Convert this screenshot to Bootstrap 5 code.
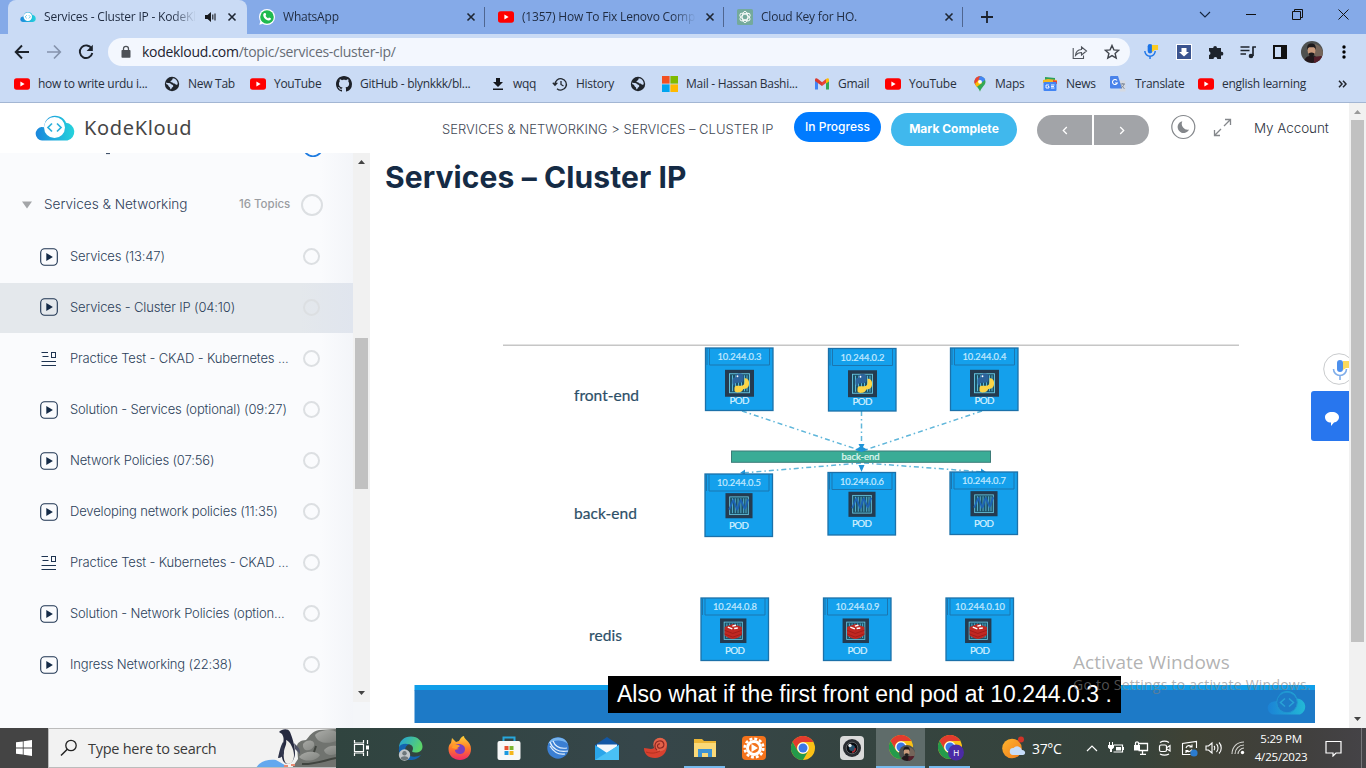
<!DOCTYPE html>
<html lang="en">
<head>
<meta charset="utf-8">
<meta name="viewport" content="width=device-width, initial-scale=1">
<title>Services - Cluster IP - KodeKloud</title>
<link href="https://cdn.jsdelivr.net/npm/bootstrap@5.3.0/dist/css/bootstrap.min.css" rel="stylesheet">
<style>
html,body{height:100%;overflow:hidden}
body{font-family:"Inter",sans-serif;background:#fff;color:#172b4d;width:1366px;height:768px}
svg{display:block;flex:none}
.seg{font-family:"Open Sans","Noto Sans",sans-serif}
/* browser chrome */
.tabstrip{height:34px;background:#85aae8;padding-left:8px;font-size:12px;letter-spacing:-.2px;color:#1f2b40}
.tabx{width:239px;height:34px;padding-left:12px;position:relative}
.tabx.act{background:#cadbf5;border-radius:8px 8px 0 0}
.tabx .ttl{width:174px;margin-left:8px;white-space:nowrap;overflow:hidden;line-height:34px;-webkit-mask-image:linear-gradient(90deg,#000 150px,transparent 174px)}
.tabx.act .ttl{width:152px;-webkit-mask-image:linear-gradient(90deg,#000 128px,transparent 152px)}
.tabx.line::after{content:"";width:1px;height:20px;background:#4f6690;position:absolute;right:1px;top:7px}
.tabx .cls{position:absolute;left:219px;top:12px}
.winb{width:46px;height:29px}
.toolbar{height:35px;background:#cadbf5;padding-left:6px}
.tb{width:32px;height:32px}
.omni{width:1022px;height:28px;border-radius:14px;background:#f3f7fe;margin-left:6px;margin-right:6px;padding:0 2px 0 12px;font-size:14px;letter-spacing:-.29px}
.omni .host{color:#1c2330}.omni .path{color:#676d76}
.marks{height:33px;background:#cadbf5;display:grid;grid-template-columns:151px 85px 86px 155px 61px 78px 32px 152px 71px 88px 69px 68px 88px 140px 20px;padding:0 0 3px 14px;font-size:12px;color:#28303d;letter-spacing:-.28px}
.marks>div{display:flex;align-items:center;gap:8px;white-space:nowrap}
.edge{height:1px;background:#a3b6d3}
/* site header */
.site{height:50px;background:#fff;width:1349px}
.brandtxt{font-family:"Noto Sans",sans-serif;font-size:20px;color:#464646;line-height:50px;letter-spacing:.65px}
.crumb{font-size:13px;font-weight:300;color:#3f4855;letter-spacing:.03px;padding-top:3px}
.pill-p{width:87px;height:30px;border-radius:15px;background:#007bff;color:#fff;font-size:12px;font-weight:500;line-height:30px;text-align:center;margin-bottom:2px}
.pill-m{width:126px;height:33px;border-radius:17px;background:#40b8ed;color:#fff;font-size:12px;font-weight:700;line-height:32px;text-align:center;margin-top:2px}
.nv{width:55px;height:30px;background:#a2a4a8}
.acct{font-size:13.5px;color:#2d333e;letter-spacing:-.08px;font-weight:300}
/* sidebar */
.side{width:353px;height:575px;background:linear-gradient(90deg,#fafbfd 320px,#f3f5f9 353px);overflow:hidden}
.side .peek{height:26px}
.sec{height:51px;font-size:13.600px;color:#2f4059;font-weight:300;margin-bottom:2px;letter-spacing:-.02px}
.tpc{height:51px;padding-left:40px;padding-bottom:2px;font-size:13px;font-weight:300;color:#2c3f5a;letter-spacing:-.15px}
.tpc.on{background:linear-gradient(90deg,#e4e8ec 300px,#e0e5ee 353px);height:50px;margin-bottom:1px}
.tpc .lbl{width:233px;margin-left:12px;padding-top:1px;white-space:nowrap}
.ring{width:17px;height:17px;border:2px solid #dcdfe2;border-radius:50%}
.ring.big{width:22px;height:22px}
.cntt{font-size:11.500px;color:#9a9da2;font-weight:500}
.sb{width:17px;background:#f1f1f1}
.sb .thumb{width:13px;background:#c1c1c1;margin:0 auto}
h1.ttlx{font-size:30px;font-weight:700;letter-spacing:.1px;color:#152b45;height:50px;line-height:49px;margin:0;padding-left:15px}
.over{position:absolute}
.capt{left:608px;top:676px;width:513px;height:37px;background:#000;color:#fff;font-family:"Liberation Sans",Arial,sans-serif;font-size:23px;line-height:36px;padding-left:9px;white-space:nowrap}
.aw{left:1073px;top:648px;color:rgba(130,130,130,.62);white-space:nowrap}
.aw .l1{font-size:19px;line-height:28px;letter-spacing:.05px}
.aw .l2{font-size:14px;line-height:18px;letter-spacing:.24px}
.chat{left:1311px;top:391px;width:38px;height:50px;background:#2876ee;border-radius:3px 0 0 3px}
.mic{left:1323px;top:353px;width:26px;height:32px;overflow:hidden}
/* taskbar */
.task{height:40px;background:linear-gradient(90deg,#444 0,#444 48px,#30443f 336px,#36464a 640px,#35443f 900px,#36433c 1130px,#3f4235 1190px,#403f3c 1290px,#454347 1366px);color:#fff}
.srch{width:288px;background:#f2f2f2;border:1px solid #bcbcbc;border-width:1px 0 1px 1px;color:#3a3a3a;font-size:14.500px;position:relative;overflow:hidden;letter-spacing:-.26px}
.ti{width:49px;height:40px;position:relative}
.ti.on{background:#5f6c6a}
.ti.run::after{content:"";position:absolute;bottom:0;left:4px;right:4px;height:2px;background:#76b9ed}
.ti.on::after{left:0;right:0}
.tray{width:24.300px}
.clock{width:66px;font-size:11.500px;line-height:18px;letter-spacing:-.2px;text-align:center}
</style>
</head>
<body>
<svg width="0" height="0" class="over">
<defs>
<linearGradient id="lg" x1="0" x2="1"><stop offset="0" stop-color="#1a86dc"/><stop offset="1" stop-color="#25d3dc"/></linearGradient>
<linearGradient id="pn" x1="0" x2="1"><stop offset="0" stop-color="#2a2f45"/><stop offset="1" stop-color="#55586a"/></linearGradient>
<linearGradient id="ff" x1="0" y1="0" x2="0" y2="1"><stop offset="0" stop-color="#ffd43a"/><stop offset=".5" stop-color="#ff7a2a"/><stop offset="1" stop-color="#f0286a"/></linearGradient>
<linearGradient id="eg" x1="0" x2="1" y1="0" y2=".4"><stop offset="0" stop-color="#1f9fe0"/><stop offset="1" stop-color="#5ad36a"/></linearGradient>
<linearGradient id="sun" x1="0" x2="1" y1="0" y2="1"><stop offset="0" stop-color="#ffb52e"/><stop offset="1" stop-color="#f07b1c"/></linearGradient>
<linearGradient id="rk" x1="0" x2="1" y1="0" y2="1"><stop offset="0" stop-color="#b9bab6"/><stop offset="1" stop-color="#70736f"/></linearGradient>
</defs>
<symbol id="yt" viewBox="0 0 16 16"><rect y="2.300" width="16" height="11.400" rx="2.600" fill="#f00"/><path d="M6.400 5.600v4.800L10.600 8z" fill="#fff"/></symbol>
<symbol id="globe" viewBox="0 0 16 16"><circle cx="8" cy="8" r="7.200" fill="#20252c"/><path d="M2.300 6.500C4 7.500 6 6.600 7 8c.6 1 2.300.6 2.300 2 0 1.200-1.600 1.300-1.800 2.600-.1.900-1.300 1-1.300-.2 0-1.400-1.500-1.500-1.800-2.700C4.200 8.500 2.500 8.500 2.100 7.800z" fill="#cadbf5"/><path d="M9 2.300C8 3 8.800 4 7.500 4.500S6 6 7.500 6.200s1.500 1.300 2.800 1.300 1 1.300 2.200 1.300 1.200-1 1.200-1.800A6 6 0 0 0 9 2.300z" fill="#cadbf5"/></symbol>
<symbol id="x" viewBox="0 0 10 10"><path d="M1.500 1.500l7 7M8.500 1.500l-7 7" stroke="#1e2633" stroke-width="1.600"/></symbol>
<symbol id="cloud" viewBox="0 0 40 26"><path d="M7 25.500a6.800 6.800 0 0 1-.6-13.500l3 .2C9 6 13.500.8 20 .8s10.600 4.600 11 7a9 9 0 0 1 1.500 17.700z" fill="url(#lg)"/><circle cx="19.500" cy="12.500" r="10.500" fill="#fff"/><path d="M17 8.500l-4 4 4 4M22 8.500l4 4-4 4" fill="none" stroke="#2bb0dc" stroke-width="1.700"/></symbol>
<symbol id="play" viewBox="0 0 18 18"><rect x=".7" y=".7" width="16.600" height="16.600" rx="4" fill="none" stroke="#1d3350" stroke-width="1.100"/><path d="M6.300 5v8l6.600-4z" fill="#142a46"/></symbol>
<symbol id="list" viewBox="0 0 18 18"><path d="M1.500 2.500h6.500M2.500 6.500h6M1.500 11.500h14.500M1.500 15.500h14.500" stroke="#1d3350" stroke-width="1.100"/><rect x="11.500" y="2.500" width="4" height="5" fill="none" stroke="#1d3350" stroke-width="1"/></symbol>
<symbol id="chrome" viewBox="0 0 24 24"><circle cx="12" cy="12" r="12" fill="#fbc116"/><path d="M1.600 6A12 12 0 0 1 22.400 6H12a6 6 0 0 0-5.200 9z" fill="#e33b2e"/><path d="M1.600 6A12 12 0 0 0 12 24l5.200-9A6 6 0 0 1 6.800 15z" fill="#249a4b"/><circle cx="12" cy="12" r="5.800" fill="#fff"/><circle cx="12" cy="12" r="4.500" fill="#3b78e7"/></symbol>
<symbol id="face" viewBox="0 0 22 22"><circle cx="11" cy="11" r="11" fill="#4e5150"/><path d="M14 3a11 11 0 0 1 8 8c0 4-2 7-4 9l-6-8z" fill="#75655a"/><path d="M3.500 19c2-5 6-4 7.500-4 4 0 6 1 7.500 4A11 11 0 0 1 3.500 19z" fill="#23181c"/><path d="M13 16c4-1 7-1 8-1-1 4-5 6.500-8 7z" fill="#541f2b"/><ellipse cx="10.500" cy="9.500" rx="3.900" ry="5.300" fill="#c99a7c"/><path d="M6.300 9C5.500 3.500 8 2.500 10.500 2.500S15.500 4 14.700 9C14 6 13 6.300 10.500 6.300S7 6 6.300 9zM7.500 12.500c2-1.500 4-1.500 6 0-.5 2.500-1.500 3-3 3s-2.500-.5-3-3z" fill="#1d1a1c"/></symbol>
<symbol id="box" viewBox="0 0 30 28"><rect x=".5" y=".5" width="29" height="27" fill="#243b50"/><rect x="5" y="4.500" width="20" height="19" fill="#1d5066" stroke="#68c9e4" stroke-width=".9"/><path d="M8 6v16M11 6v16M14 6v16M17 6v16M20 6v16M22.500 6v16" stroke="#57b7d5" stroke-width="1"/></symbol>
<symbol id="py" viewBox="0 0 30 28"><use href="#box"/><path d="M8 11.500c0-2.500 1-3.500 3-3.500V6c1-2 7-2.500 8 0v4.500c0 2-1.500 3-3.500 3h-3c-2 0-2.500 1-2.500 3-2 0-2-3-2-5z" fill="#2c639b"/><path d="M20 9c3 0 5 2 4.500 5.500 0 3.500-2 5-4.500 5l-1.500.5c0 3-7.500 4.500-8.500 1.500v-2.500c0-2 1-2.500 3-2.500h3.500c2.500 0 3.500-1.500 3.500-4z" fill="#fbd446"/><circle cx="13" cy="7" r=".9" fill="#fff"/></symbol>
<symbol id="bk" viewBox="0 0 30 28"><use href="#box"/><path d="M4 18c2-1 3-8 5-10l4 10c2-1 2-9 4-10l4 9c2-1 2-7 4-10" fill="none" stroke="#1d63b4" stroke-width="2"/></symbol>
<symbol id="rd" viewBox="0 0 30 28"><use href="#box"/><path d="M5.500 10l9-3.500 10 3.500v8.500c-3 3-6 4-10 4.500-4-.5-7-2-9-4z" fill="#c02822"/><path d="M5.500 13.500l9 3.500 10-3.500M5.500 17.500l9 3.500 10-3.500" stroke="#9b1a17" stroke-width=".9" fill="none"/><path d="M9 10l5 2M14 9l4-1M16 11.500l4-.5" stroke="#fff" stroke-width="1.500"/></symbol>
<symbol id="micx" viewBox="0 0 18 18"><rect x="6" y="1" width="5" height="10" rx="2.500" fill="#1a73e8"/><path d="M3 8.500a5.500 5.500 0 0 0 11 0M8.500 14v3" fill="none" stroke="#1a73e8" stroke-width="1.500"/><path d="M10.500 2H17v5.500h-3.500l-3 2z" fill="#fbcb22"/></symbol>
</svg>

<header>
 <div class="tabstrip seg d-flex">
  <div class="tabx act d-flex align-items-center"><svg width="16" height="12"><use href="#cloud"/></svg><span class="ttl">Services - Cluster IP - KodeKloud</span>
   <svg class="over" style="left:197px;top:11px" width="12" height="12" viewBox="0 0 12 12"><path d="M0 4h2.500L6 1v10L2.500 8H0z" fill="#16181d"/><path d="M7.800 3.500v5M10 2.500v7" stroke="#16181d" stroke-width="1.100"/></svg>
   <svg class="cls" width="10" height="10"><use href="#x"/></svg></div>
  <div class="tabx line d-flex align-items-center"><svg width="16" height="16" viewBox="0 0 16 16"><circle cx="8" cy="8" r="8" fill="#fff"/><path d="M.3 15.800L1.500 12 4 14.800z" fill="#fff"/><circle cx="8" cy="8" r="6.800" fill="#1fba4e"/><path d="M5.300 4l1.500.3.400 1.700-.7.800c.6 1.200 1.400 2 2.600 2.600l.8-.9 2 .8c.1 1.500-1 2.300-2.300 2.200C6.500 11 4.300 8.400 4.200 6c0-.9.400-1.600 1.100-2z" fill="#fff"/></svg><span class="ttl">WhatsApp</span><svg class="cls" width="10" height="10"><use href="#x"/></svg></div>
  <div class="tabx line d-flex align-items-center"><svg width="16" height="16"><use href="#yt"/></svg><span class="ttl">(1357) How To Fix Lenovo Computer</span><svg class="cls" width="10" height="10"><use href="#x"/></svg></div>
  <div class="tabx line d-flex align-items-center"><svg width="16" height="16" viewBox="0 0 16 16"><rect width="16" height="16" rx="1.500" fill="#74aa9c"/><g fill="none" stroke="#fff" stroke-width=".9"><ellipse cx="8" cy="8" rx="2.800" ry="5.600"/><ellipse cx="8" cy="8" rx="2.800" ry="5.600" transform="rotate(60 8 8)"/><ellipse cx="8" cy="8" rx="2.800" ry="5.600" transform="rotate(120 8 8)"/></g></svg><span class="ttl">Cloud Key for HO.</span><svg class="cls" width="10" height="10"><use href="#x"/></svg></div>
  <div class="d-flex align-items-center ps-3"><svg width="14" height="14" viewBox="0 0 14 14"><path d="M7 1v12M1 7h12" stroke="#1b212c" stroke-width="1.800"/></svg></div>
  <div class="d-flex ms-auto">
   <div class="winb d-flex align-items-center justify-content-center"><svg width="12" height="8" viewBox="0 0 12 8"><path d="M1 1l5 5 5-5" fill="none" stroke="#16263f" stroke-width="1.100"/></svg></div>
   <div class="winb d-flex align-items-center justify-content-center"><svg width="10" height="1"><rect width="10" height="1" fill="#111"/></svg></div>
   <div class="winb d-flex align-items-center justify-content-center"><svg width="11" height="11" viewBox="0 0 11 11"><path d="M.5 2.500h8v8h-8zM2.500 2.500v-2h8v8h-2" fill="none" stroke="#111"/></svg></div>
   <div class="winb d-flex align-items-center justify-content-center"><svg width="11" height="11" viewBox="0 0 11 11"><path d="M.5.5l10 10M10.500.5l-10 10" stroke="#111"/></svg></div>
  </div>
 </div>
 <div class="toolbar seg d-flex align-items-center">
  <div class="tb d-flex align-items-center justify-content-center"><svg width="16" height="16" viewBox="0 0 16 16"><path d="M15 8H2M8 1.500L1.700 8 8 14.500" fill="none" stroke="#1c222b" stroke-width="1.900"/></svg></div>
  <div class="tb d-flex align-items-center justify-content-center"><svg width="16" height="16" viewBox="0 0 16 16"><path d="M1 8h13M8 1.500L14.300 8 8 14.500" fill="none" stroke="#8593ac" stroke-width="1.700"/></svg></div>
  <div class="tb d-flex align-items-center justify-content-center"><svg width="16" height="16" viewBox="0 0 16 16"><path d="M13.600 4.600A6.300 6.300 0 1 0 14.300 9" fill="none" stroke="#1c222b" stroke-width="1.900"/><path d="M14.800.8v6.200H8.600z" fill="#1c222b"/></svg></div>
  <div class="omni d-flex align-items-center">
   <svg width="12" height="14" viewBox="0 0 12 14"><rect x="1.500" y="5" width="9" height="7.800" rx=".8" fill="#4d5157"/><path d="M3.500 5.500V3.800a2.500 2.500 0 0 1 5 0v1.700" fill="none" stroke="#4d5157" stroke-width="1.300"/></svg>
   <span class="ms-2"><span class="host" style="margin-left:2px">kodekloud.com</span><span class="path">/topic/services-cluster-ip/</span></span>
   <span class="d-flex ms-auto"><span class="tb d-flex align-items-center justify-content-center"><svg width="16" height="16" viewBox="0 0 16 16"><path d="M1.200 4v10.500h10.300v-3M3.500 11.500c.3-4 2.500-5.800 6-6V3l5 4-5 4V8.500c-2.500 0-4.500 1-6 3z" fill="none" stroke="#50555d" stroke-width="1.100"/></svg></span><span class="tb d-flex align-items-center justify-content-center"><svg width="16" height="16" viewBox="0 0 16 16"><path d="M8 1.500l1.900 4.400 4.800.4-3.600 3.100 1.100 4.700L8 11.600l-4.200 2.500 1.100-4.700-3.600-3.100 4.800-.4z" fill="none" stroke="#40454d" stroke-width="1.400"/></svg></span></span>
  </div>
  <div class="tb d-flex align-items-center justify-content-center pe-1"><svg width="17" height="17"><use href="#micx"/></svg></div>
  <div class="tb d-flex align-items-center justify-content-center"><svg width="16" height="16" viewBox="0 0 16 16"><rect x=".5" y=".5" width="15" height="15" fill="#3b548f" stroke="#fff"/><path d="M5.500 4h5v4H13l-5 4.500L3 8h2.500z" fill="#fff"/></svg></div>
  <div class="tb d-flex align-items-center justify-content-center"><svg width="16" height="16" viewBox="0 0 16 16"><path d="M1 4h4.200a1.900 1.900 0 1 1 3.800 0H13v3.800a1.900 1.900 0 1 1 0 3.700V15H9.300a1.900 1.900 0 0 0-3.800 0H1v-4a1.900 1.900 0 0 0 0-3.700z" fill="#1e242d"/></svg></div>
  <div class="tb d-flex align-items-center justify-content-center"><svg width="17" height="14" viewBox="0 0 17 14"><path d="M.5 2h9M.5 5.500h9M.5 9h5.500M13 2v9M12.300 2H16" stroke="#1e242d" stroke-width="1.700"/><circle cx="11" cy="11" r="2.300" fill="#1e242d"/></svg></div>
  <div class="tb d-flex align-items-center justify-content-center"><svg width="14" height="14" viewBox="0 0 14 14"><rect x="1" y="1" width="12" height="12" fill="none" stroke="#111" stroke-width="2"/><rect x="8" width="6" height="14" fill="#111"/></svg></div>
  <div class="tb d-flex align-items-center justify-content-center"><svg width="22" height="22"><use href="#face"/></svg></div>
  <div class="tb d-flex align-items-center justify-content-center"><svg width="4" height="14" viewBox="0 0 4 14"><circle cx="2" cy="2" r="1.700"/><circle cx="2" cy="7" r="1.700"/><circle cx="2" cy="12" r="1.700"/></svg></div>
 </div>
 <div class="marks seg">
  <div><svg width="16" height="16"><use href="#yt"/></svg>how to write urdu i...</div>
  <div style="margin-left:-1px"><svg width="16" height="16"><use href="#globe"/></svg>New Tab</div>
  <div><svg width="16" height="16"><use href="#yt"/></svg>YouTube</div>
  <div><svg width="16" height="16" viewBox="0 0 16 16"><path d="M8 0C3.580 0 0 3.580 0 8c0 3.540 2.290 6.530 5.470 7.590.4.070.55-.17.55-.38 0-.19-.01-.82-.01-1.490-2.010.37-2.530-.49-2.690-.94-.09-.23-.48-.94-.82-1.130-.28-.15-.68-.52-.01-.53.63-.01 1.080.58 1.230.82.720 1.210 1.870.87 2.330.66.070-.52.280-.87.510-1.070-1.780-.2-3.640-.89-3.640-3.950 0-.87.310-1.590.82-2.150-.08-.2-.36-1.020.08-2.120 0 0 .67-.21 2.200.82.640-.18 1.320-.27 2-.27s1.360.09 2 .27c1.530-1.040 2.200-.82 2.200-.82.440 1.100.16 1.920.08 2.120.51.56.82 1.270.82 2.150 0 3.070-1.870 3.750-3.650 3.950.29.25.54.73.54 1.480 0 1.070-.01 1.930-.01 2.200 0 .21.150.46.550.38A8 8 0 0 0 16 8c0-4.420-3.580-8-8-8" fill="#1d2129"/></svg>GitHub - blynkkk/bl...</div>
  <div><svg width="14" height="14" viewBox="0 0 14 14"><path d="M5 1h4v4h3l-5 5-5-5h3zM2 11.500h10V13H2z" fill="#15181d"/></svg>wqq</div>
  <div><svg width="16" height="16" viewBox="0 0 16 16"><path d="M3 8.500A5.700 5.700 0 1 1 5 12.700M.8 6.800L3 9.200l2.300-2.400M9 5v3.500l2.500 1.500" fill="none" stroke="#23282f" stroke-width="1.300"/></svg>History</div>
  <div><svg width="16" height="16"><use href="#globe"/></svg></div>
  <div><svg width="16" height="16" viewBox="0 0 16 16"><path fill="#f25022" d="M0 0h7.600v7.600H0z"/><path fill="#7fba00" d="M8.400 0H16v7.600H8.400z"/><path fill="#00a4ef" d="M0 8.400h7.600V16H0z"/><path fill="#ffb900" d="M8.400 8.400H16V16H8.400z"/></svg>Mail - Hassan Bashi...</div>
  <div><svg width="16" height="16" viewBox="0 0 16 16"><path d="M1 13.500V4l3 2.500v7z" fill="#4285f4"/><path d="M15 13.500V4l-3 2.500v7z" fill="#34a853"/><path d="M1 4c0-2 1.500-2.200 3-1l4 3.200V10L1 5z" fill="#d93b30"/><path d="M12 3l-4 3.200V10l4-3z" fill="#ea4335"/><path d="M12 3c1.500-1.200 3-1 3 1v1.500l-3 2z" fill="#fbbc04"/></svg>Gmail</div>
  <div><svg width="16" height="16"><use href="#yt"/></svg>YouTube</div>
  <div><svg width="14" height="16" viewBox="0 0 14 16"><path d="M7 .3a5.500 5.500 0 0 1 5.500 5.500C12.500 9.500 8.500 11 7 15.700 5.500 11 1.500 9.500 1.500 5.800A5.500 5.500 0 0 1 7 .3z" fill="#34a853"/><path d="M7 .3C4 .3 1.500 2.500 1.500 5.800c0 1.200.4 2.200 1 3L9 1z" fill="#ea4335"/><path d="M7 .3c2.300 0 4.300 1.400 5.200 3.500L7 8 5 5z" fill="#4285f4"/><path d="M1.700 4.500L4 2l3 3-4.300 4.200c-1-1.400-1.500-3-1-4.700z" fill="#ea4335"/><path d="M2 8l4-4.500L9 7l-5.300 4z" fill="#fbbc04"/><circle cx="7" cy="5.800" r="1.900" fill="#fff"/></svg>Maps</div>
  <div><svg width="16" height="16" viewBox="0 0 16 16"><path d="M3 1l10 1v5H3z" fill="#2ea05a"/><path d="M1 4l5-1 9 1v3H1z" fill="#f5b921"/><path d="M11 4l4 1v3h-4z" fill="#e2453a"/><rect x="1.500" y="6" width="13" height="9" rx="1" fill="#4285f4"/><path d="M7 9H4v3h3v-1.500H6M9 9h3.500M9 10.500h3M9 12h3.500" fill="none" stroke="#fff" stroke-width=".9"/></svg>News</div>
  <div><svg width="17" height="16" viewBox="0 0 17 16"><path d="M7 4.500h8.500v11H10z" fill="#d5dae2"/><path d="M1 0h7l4 12.500H1a1 1 0 0 1-1-1V1a1 1 0 0 1 1-1z" fill="#4a83ea"/><path d="M7 4.500A2.500 2.500 0 1 0 7.300 7H5" fill="none" stroke="#fff" stroke-width="1.100"/><path d="M10.500 8H15M12.800 7v1M14 8c-.5 2-1.500 3-3 4M11.500 9.500c1 1.500 2 2.500 3 3" fill="none" stroke="#7b8696"/></svg>Translate</div>
  <div><svg width="16" height="16"><use href="#yt"/></svg>english learning</div>
  <div><svg width="9" height="8" viewBox="0 0 9 8"><path d="M1 .8L4 4 1 7.200M5 .8L8 4 5 7.200" fill="none" stroke="#20252d" stroke-width="1.500"/></svg></div>
 </div>
 <div class="edge"></div>
</header>

<div class="d-flex">
 <div>
  <nav class="site d-flex align-items-center">
   <svg width="40" height="26" style="margin-left:35px"><use href="#cloud"/></svg>
   <div class="brandtxt" style="margin-left:9px;width:358px">KodeKloud</div>
   <div class="crumb" style="width:352px">SERVICES &amp; NETWORKING &gt; SERVICES – CLUSTER IP</div>
   <div class="pill-p">In Progress</div>
   <div class="pill-m" style="margin-left:10px">Mark Complete</div>
   <div class="d-flex" style="margin-left:20px;margin-top:4px;gap:2px">
    <div class="nv rounded-start-pill d-flex align-items-center justify-content-center"><svg width="6" height="9" viewBox="0 0 6 9"><path d="M4.800 1L1.300 4.500 4.800 8" fill="none" stroke="#fff" stroke-width="1.300"/></svg></div>
    <div class="nv rounded-end-pill d-flex align-items-center justify-content-center"><svg width="6" height="9" viewBox="0 0 6 9"><path d="M1.200 1l3.500 3.500L1.200 8" fill="none" stroke="#fff" stroke-width="1.300"/></svg></div>
   </div>
   <svg width="26" height="26" viewBox="0 0 26 26" style="margin-left:21px;margin-bottom:2px"><circle cx="13.300" cy="13" r="11.500" fill="#fff" stroke="#84878b" stroke-width="1.200"/><path d="M12.300 7.200a6 6 0 1 0 6.800 8.300 6 6 0 0 1-6.800-8.300z" fill="#84878b"/></svg>
   <svg width="19" height="19" viewBox="0 0 19 19" style="margin-left:17px;margin-bottom:1px"><path d="M12 1.500h5.500V7M17 2l-6 6M7 17.500H1.500V12M2 17l6-6" fill="none" stroke="#84878b" stroke-width="1.300"/></svg>
   <div class="acct" style="margin-left:22px;padding-top:1px">My Account</div>
  </nav>
  <div class="d-flex">
   <aside class="side d-flex flex-column">
    <div class="peek"><svg width="353" height="4" viewBox="0 0 353 4"><circle cx="313" cy="-6" r="9.300" fill="none" stroke="#1e7be0" stroke-width="1.800"/><path d="M106 .5h4" stroke="#42526a" stroke-width="1.200"/></svg></div>
    <div class="sec d-flex align-items-center"><svg width="10" height="8" viewBox="0 0 10 8" style="margin-left:22px"><path d="M0 .5h10L5 7.500z" fill="#a3a5a8"/></svg><span style="margin-left:12px;width:195px">Services &amp; Networking</span><span class="cntt" style="width:62px">16 Topics</span><span class="ring big"></span></div>
    <div class="tpc d-flex align-items-center"><svg width="18" height="18"><use href="#play"/></svg><span class="lbl">Services (13:47)</span><span class="ring"></span></div>
    <div class="tpc on d-flex align-items-center"><svg width="18" height="18"><use href="#play"/></svg><span class="lbl">Services - Cluster IP (04:10)</span><span class="ring"></span></div>
    <div class="tpc d-flex align-items-center"><svg width="18" height="18"><use href="#list"/></svg><span class="lbl">Practice Test - CKAD - Kubernetes ...</span><span class="ring"></span></div>
    <div class="tpc d-flex align-items-center"><svg width="18" height="18"><use href="#play"/></svg><span class="lbl">Solution - Services (optional) (09:27)</span><span class="ring"></span></div>
    <div class="tpc d-flex align-items-center"><svg width="18" height="18"><use href="#play"/></svg><span class="lbl">Network Policies (07:56)</span><span class="ring"></span></div>
    <div class="tpc d-flex align-items-center"><svg width="18" height="18"><use href="#play"/></svg><span class="lbl">Developing network policies (11:35)</span><span class="ring"></span></div>
    <div class="tpc d-flex align-items-center"><svg width="18" height="18"><use href="#list"/></svg><span class="lbl">Practice Test - Kubernetes - CKAD ...</span><span class="ring"></span></div>
    <div class="tpc d-flex align-items-center"><svg width="18" height="18"><use href="#play"/></svg><span class="lbl">Solution - Network Policies (option...</span><span class="ring"></span></div>
    <div class="tpc d-flex align-items-center"><svg width="18" height="18"><use href="#play"/></svg><span class="lbl">Ingress Networking (22:38)</span><span class="ring"></span></div>
   </aside>
   <div style="background:#f4f6f9">
   <div class="sb d-flex flex-column" style="height:549px"><svg width="17" height="17" viewBox="0 0 17 17"><path d="M5 11h7L8.500 7z" fill="#444"/></svg><div class="thumb" style="height:151px;margin-top:168px"></div><svg class="mt-auto" width="17" height="17" viewBox="0 0 17 17"><path d="M5 6h7l-3.500 4z" fill="#444"/></svg></div>
   </div>
   <main style="width:979px">
    <h1 class="ttlx">Services – Cluster IP</h1>
    <svg width="979" height="525" viewBox="370 203 979 525" font-family="Lato, sans-serif">
     <path d="M503 345.300h736" stroke="#c6c6c6" stroke-width="1.600"/>
     <rect x="414.500" y="685" width="900.500" height="5.500" fill="#109ee9"/><rect x="414.500" y="690" width="900.500" height="33" fill="#1d7ac7"/>
     <g opacity=".7"><path d="M1274.500 714.500a6.500 6.500 0 0 1-.5-13l3-.5c1-6 4-10 10-10s9 4 10 7.500a8.300 8.300 0 0 1 3 16z" fill="url(#lg)"/></g><circle cx="1287" cy="702.500" r="10.300" fill="#1d7ac7" stroke="#2196d0"/><path d="M1285 698.500l-4.500 4 4.500 4M1289 698.500l4.500 4-4.500 4" fill="none" stroke="#29a3d6" stroke-width="1.500"/>
     <g fill="#2d4f68" font-size="15.500" stroke="#2d4f68" stroke-width=".2"><text x="574" y="401" textLength="65">front-end</text><text x="574" y="518.500" textLength="63">back-end</text><text x="589" y="641" textLength="33">redis</text></g>
     <g fill="none" stroke="#5fb6da" stroke-width="1.500" stroke-dasharray="5 3 1.500 3"><path d="M742 411L859 450M861.500 411V449M982 411L865 450M861 463L742 473M864 463L984 472"/></g>
     <rect x="731.500" y="451" width="259" height="11.300" fill="#3aac96" stroke="#3c7c78"/><text x="841.500" y="460" font-size="9.500" fill="#e0f7f0" stroke="#e0f7f0" stroke-width=".2" textLength="38">back-end</text>
     <g fill="#2095d8"><path d="M855 450l6-4 7 4-6.500 2zM858.500 444h6l-3 6zM858.500 465h6l-3 7zM740 473l5-3.500v5zM986 472l-5-3.500v5z"/></g>
     <g id="pods"></g>
    </svg>
   </main>
  </div>
 </div>
 <div class="sb d-flex flex-column" style="height:625px"><svg width="17" height="17" viewBox="0 0 17 17"><path d="M5 11h7L8.500 7z" fill="#999"/></svg><div class="thumb" style="height:522px"></div><svg class="mt-auto" width="17" height="17" viewBox="0 0 17 17"><path d="M5 6h7l-3.500 4z" fill="#444"/></svg></div>
</div>

<footer class="task seg d-flex">
 <div class="d-flex align-items-center justify-content-center" style="width:48px"><svg width="16" height="16" viewBox="0 0 16 16"><path d="M0 2.300l6.800-.9v6.200H0zM7.600 1.300L16 0v7.600H7.600zM0 8.400h6.800v6.200L0 13.700zM7.600 8.400H16V16l-8.400-1.200z" fill="#fff"/></svg></div>
 <div class="srch d-flex align-items-center"><svg width="18" height="18" viewBox="0 0 18 18" style="margin-left:11px"><circle cx="11" cy="6.500" r="5.200" fill="none" stroke="#222" stroke-width="1.300"/><path d="M7.300 10.300L1 16.500" stroke="#222" stroke-width="1.500"/></svg><span style="margin-left:10px;padding-top:1px">Type here to search</span>
  <svg class="over" style="right:0;top:0" width="80" height="38" viewBox="256 729 80 38"><path d="M256 768c4-7 12-9 20-8l14 8z" fill="#63a8ee"/><path d="M292 768l6-9-1-13c0-3 4-6 9-6 4-4 5-8 13-10l17-1v39z" fill="#70736f"/><path d="M303 744c4-6 13-4 11 2-3 6-12 6-11-2zM315 735c5-6 19-6 21-3v9c-7 3-19 3-21-6z" fill="url(#rk)"/><path d="M299 757c6-7 17-6 21-2-3 6-15 8-21 2zM324 750c3-4 9-5 12-4v8c-5 2-11 1-12-4z" fill="url(#rk)"/><path d="M302 764c10 1 20-3 34-6M316 746l-2 6" stroke="#40443f" stroke-width="2" fill="none"/><path d="M279 732c3-3 9-4 11 0 2 5 5 13 5 21 0 6-3 10-7 11-6 0-7-8-6-16 1-6 3-9 0-14z" fill="#262a40"/><path d="M286 740c4 1 8 9 8 15s-3 9-6 9c-4 0-5-8-4-13s3-7 2-11z" fill="#f0eeea"/><path d="M283 742c-3 5-4 12-5 16 3 0 5-2 6-5zM294 743c3 3 7 6 6 11l-5-5z" fill="url(#pn)"/><path d="M284 765h4v2h-4zM291 764h4v2h-4z" fill="#e88972"/></svg></div>
 <div class="d-flex align-items-center justify-content-center" style="width:50px"><svg width="17" height="16" viewBox="0 0 17 16"><path d="M1.500 0v3h9V0M1.500 4.500h9v7h-9zM1.500 16v-3h9v3M14.500 0v4M14.500 11v5" fill="none" stroke="#fff" stroke-width="1.200"/><path d="M13 5.500h3v4h-3z" fill="#fff"/></svg></div>
 <div class="ti d-flex align-items-center justify-content-center"><svg width="25" height="25" viewBox="0 0 25 25"><path d="M1 12C1 5 6 .5 13 .5s11.500 5 11.500 10c0 4-3 6-7 6-3 0-4-1-3-2 2-4-2-7-6-6-4 0-6 1-7.500 3.500z" fill="url(#eg)"/><path d="M1 11c2-3.500 7-4 10-2.500-4 1-5 6-2 9 3 4 9 4 14 1.500-3 4-7 5-10 5C5 25 0 19 1 11z" fill="#1463b0"/><circle cx="6.500" cy="19" r="5.700" fill="#c1c6c9"/><circle cx="6.500" cy="17.300" r="2.200" fill="#6e777b"/><path d="M2.500 22.500c1-3 7-3 8 0-2 2-6 2-8 0z" fill="#6e777b"/></svg></div>
 <div class="ti d-flex align-items-center justify-content-center"><svg width="24" height="25" viewBox="0 0 24 25"><path d="M3 7l1-5 4 4 3-1c1-2 3-5 5-5 0 4 7 5 7 13 0 7-5 11-11 11S.5 20 .5 13c0-3 1-5 2.500-6z" fill="url(#ff)"/><path d="M7 9c3-2 10-1 10 4 0 4-3 5-5 5s-5-1-5-4l4-1-2-1c-1-1-2-2-2-3z" fill="#7a3fc2"/><path d="M5 8c3 0 6 1 7 2l-4 3-4-1z" fill="#ff9c29"/></svg></div>
 <div class="ti d-flex align-items-center justify-content-center"><svg width="24" height="25" viewBox="0 0 24 25"><path d="M6.500 7V1.500h11V7" fill="none" stroke="#27a7dc" stroke-width="2"/><rect x=".5" y="5" width="23" height="19" rx="2" fill="#f7f8f8"/><path d="M7.500 10h4v4h-4z" fill="#e65130"/><path d="M12.500 10h4v4h-4z" fill="#7bb531"/><path d="M7.500 15h4v4h-4z" fill="#1d9ae0"/><path d="M12.500 15h4v4h-4z" fill="#f4b71c"/></svg></div>
 <div class="ti d-flex align-items-center justify-content-center"><svg width="22" height="22" viewBox="0 0 22 22"><circle cx="11" cy="11" r="10.700" fill="#3b7fd3"/><path d="M1 7A11 11 0 0 1 21 7C14 2 7 3 1 7z" fill="#76b4f0"/><path d="M3 5c2 6 8 11 18 9M6 4c2 5 7 8 14 7M3 9c3 5 8 9 15 8" fill="none" stroke="#e3f0fd" stroke-width="1.200"/></svg></div>
 <div class="ti d-flex align-items-center justify-content-center"><svg width="24" height="23" viewBox="0 0 24 23"><path d="M0 8l12-8 12 8v4H0z" fill="#1257a5"/><path d="M2 7.500h20V14l-10 3L2 14z" fill="#f4f8fc"/><path d="M0 8l12 8L24 8v15H0z" fill="#2aa5ea"/><path d="M0 23l24-15v15z" fill="#49c0f5"/></svg></div>
 <div class="ti d-flex align-items-center justify-content-center"><svg width="25" height="22" viewBox="0 0 25 22"><path d="M1 11c4 0 7 2 10 0V5c1-5 13-6 13 3 0 8-5 13-12 13C5 21 1 17 1 11z" fill="#d9412f"/><circle cx="17" cy="7.500" r="6.700" fill="#e2634a"/><path d="M14 13c-3-2-3-8 2-9s7 6 2 7-4-5-1-4" fill="none" stroke="#8f2723" stroke-width="1.200"/><path d="M3 15c6 2 10 1 14-1" fill="none" stroke="#b3301f"/></svg></div>
 <div class="ti run d-flex align-items-center justify-content-center"><svg width="22" height="20" viewBox="0 0 22 20"><path d="M0 1h8l2 2h12v16H0z" fill="#ecb636"/><path d="M0 5h22v14H0z" fill="#fad978"/><path d="M4 19v-8h14v8h-4v-4H8v4z" fill="#3d93d3"/></svg></div>
 <div class="ti d-flex align-items-center justify-content-center"><svg width="24" height="24" viewBox="0 0 24 24"><rect width="24" height="24" rx="4" fill="#f4731c"/><circle cx="12" cy="12" r="9.300" fill="none" stroke="#fff" stroke-width="2.600" stroke-dasharray="2.900 1.970"/><circle cx="12" cy="12" r="6.500" fill="none" stroke="#fff" stroke-width="3"/><path d="M9.500 8l6.500 4-6.500 4z" fill="#fff"/></svg></div>
 <div class="ti d-flex align-items-center justify-content-center"><svg width="24" height="24"><use href="#chrome"/></svg></div>
 <div class="ti d-flex align-items-center justify-content-center"><svg width="24" height="24" viewBox="0 0 24 24"><rect width="24" height="24" rx="4" fill="#dadada"/><circle cx="12" cy="12" r="9" fill="#292c31"/><circle cx="12" cy="12" r="5.800" fill="#0a0c11" stroke="#5a5d60"/><circle cx="12" cy="12" r="3" fill="#28506b"/><circle cx="10" cy="9.500" r="1.700" fill="#e3e8ea"/><path d="M15 12a3 3 0 0 1-3 4" stroke="#b42f35" stroke-width="1.500" fill="none"/></svg></div>
 <div class="ti run on d-flex align-items-center justify-content-center"><svg width="28" height="26" viewBox="-2 0 28 26"><use href="#chrome" width="24" height="24"/><use href="#face" x="10" y="10" width="16" height="16"/></svg></div>
 <div class="ti run d-flex align-items-center justify-content-center"><svg width="28" height="26" viewBox="-2 0 28 26" font-family="Inter, sans-serif"><use href="#chrome" width="24" height="24"/><circle cx="18" cy="17.500" r="8" fill="#4b2ba5"/><text x="15.300" y="21" font-size="8" fill="#fff">H</text></svg></div>
 <div class="d-flex align-items-center" style="margin-left:28px;width:78px"><svg width="24" height="24" viewBox="0 0 24 24"><circle cx="10" cy="12.500" r="9.800" fill="url(#sun)"/><circle cx="19" cy="3.500" r="3" fill="#d03428"/><path d="M11 19a3.500 3.500 0 0 1 .5-7 5 5 0 0 1 8.500 2c4 0 4 5 1 5z" fill="#c6dcf8"/></svg><span style="font-size:14px;margin-left:6px;letter-spacing:-.35px">37°C</span></div>
 <div class="d-flex align-items-center">
  <div class="tray d-flex justify-content-center"><svg width="12" height="7" viewBox="0 0 12 7"><path d="M1 6l5-5 5 5" fill="none" stroke="#fff" stroke-width="1.200"/></svg></div>
  <div class="tray d-flex justify-content-center"><svg width="16" height="14" viewBox="0 0 16 14"><path d="M5.500 4h9v7h-9M15.500 6v3" fill="none" stroke="#fff" stroke-width="1.200"/><path d="M8 6h5v3.500H8zM0 4h6v2.500L4.500 8H4v3H2V8h-.5L0 6.500zM1 1h1v3H1zM4 1h1v3H4z" fill="#fff"/></svg></div>
  <div class="tray d-flex justify-content-center"><svg width="16" height="15" viewBox="0 0 16 15"><path d="M5.500 2.500h9v7h-9M9.500 9.500V13M7 13.300h6M2.500 4V2.300a1.500 1.500 0 0 1 3 0V4" fill="none" stroke="#fff" stroke-width="1.300"/><path d="M1 4h6v5.500H1z" fill="#fff"/></svg></div>
  <div class="tray d-flex justify-content-center"><svg width="14" height="16" viewBox="0 0 14 16"><rect x="1.500" y="5" width="7" height="6.500" rx="1.500" fill="none" stroke="#fff" stroke-width="1.200"/><path d="M9 7.500l3-2v5.500L9 9M2 2.500c3-1.800 6-1.800 9 0M2 14c3 1.500 6 1.500 9 0" fill="none" stroke="#fff" stroke-width="1.200"/></svg></div>
  <div class="tray d-flex justify-content-center"><svg width="17" height="17" viewBox="0 0 17 17"><path d="M15.500 8V1.500L1.500 3.500v11h8" fill="none" stroke="#fff" stroke-width="1.100"/><path d="M5 8c1-3 4-3 6-1M11 4.500V7H8.500M11 9.500c-1 2-4 3-6 1M5 13v-2.500h2.500" fill="none" stroke="#fff" stroke-width="1.100"/><circle cx="13" cy="13" r="3.600" fill="#2b7cd0"/></svg></div>
  <div class="tray d-flex justify-content-center"><svg width="17" height="14" viewBox="0 0 17 14"><path d="M1 5h2.500L7 2v10L3.500 9H1zM9 5c1 1 1 3 0 4M11.500 3c2 2 2 6 0 8M14 1.500c3 3 3 8 0 11" fill="none" stroke="#fff" stroke-width="1.100"/></svg></div>
  <div class="tray d-flex justify-content-center"><svg width="14" height="14" viewBox="0 0 14 14"><path d="M1 13C1 6 6 1 13 1M4 13c0-5 4-9 9-9M7 13c0-3 3-6 6-6" fill="none" stroke="#d6d6d2" stroke-width="1.100"/><circle cx="11.500" cy="11.500" r="1.700" fill="#fff"/></svg></div>
 </div>
 <div class="clock d-flex flex-column justify-content-center" style="margin-left:-2px"><span>5:29 PM</span><span>4/25/2023</span></div>
 <div class="d-flex align-items-center" style="margin-left:11px;width:36px"><svg width="17" height="17" viewBox="0 0 17 17"><path d="M1 1.500h15v11.500h-5L8 16v-3H1z" fill="none" stroke="#fff" stroke-width="1.200"/></svg></div>
 <div style="width:1px;background:#77767a"></div>
</footer>

<div class="over capt">Also what if the first front end pod at 10.244.0.3 .</div>
<div class="over aw seg"><div class="l1">Activate Windows</div><div class="l2">Go to Settings to activate Windows.</div></div>
<div class="over mic"><svg width="32" height="32" viewBox="0 0 32 32"><circle cx="16" cy="16" r="15.300" fill="#fff" stroke="#c9cbcd"/><rect x="14" y="7" width="6" height="12" rx="3" fill="#4c8fec"/><path d="M10.500 16a6.500 6.500 0 0 0 13 0M17 22.500V27" fill="none" stroke="#80aeea" stroke-width="1.600"/><path d="M20 8h8v7h-5l-3 2z" fill="#fbd95b"/></svg></div>
<div class="over chat d-flex align-items-center justify-content-center pt-1 ps-1"><svg width="16" height="15" viewBox="0 0 16 15"><path d="M8 1c4 0 7 2 7 5.200 0 3-2.500 4.800-5 5.300L7 15v-3.400C3.500 11.400 1 9.300 1 6.200 1 3 4 1 8 1z" fill="#fff"/></svg></div>

<script>
/* pod cards: x, y, ip, icon kind */
const pods=[[705.5,348,'10.244.0.3','py'],[828.5,348.5,'10.244.0.2','py'],[950.5,348,'10.244.0.4','py'],
[705,474,'10.244.0.5','bk'],[828,472.5,'10.244.0.6','bk'],[950,472,'10.244.0.7','bk'],
[701,598,'10.244.0.8','rd'],[823.5,598,'10.244.0.9','rd'],[946,598,'10.244.0.10','rd']];
/* icon geometry per kind: dx, dy, width, height, and POD baseline */
const geo={py:[19,21,30,28.5,56],bk:[20,18.5,28,26.5,54.5],rd:[18.500,20,27.5,25.5,55.5]};
document.getElementById('pods').innerHTML=pods.map(([x,y,ip,ic])=>{
 const w=ip.length>10?50:44,[dx,dy,iw,ih,b]=geo[ic];
 return `<rect x="${x}" y="${y}" width="67.500" height="62.500" fill="#14a0ec" stroke="#1b71aa" stroke-width="1.300"/>
 <path d="M${x+4} ${y}v17h60v-17M${x+1.500} ${y}v17" fill="none" stroke="#1b76b0"/>
 <text x="${x+34-w/2}" y="${y+12}" font-size="9.300" fill="#c5eaff" stroke="#c5eaff" stroke-width=".2" textLength="${w}">${ip}</text>
 <text x="${x+24}" y="${y+b}" font-size="9.800" fill="#d8f2ff" stroke="#d8f2ff" stroke-width=".2" textLength="20">POD</text>
 <use href="#${ic}" x="${x+dx}" y="${y+dy}" width="${iw}" height="${ih}"/>`}).join('');
</script>
<script src="https://cdn.jsdelivr.net/npm/bootstrap@5.3.0/dist/js/bootstrap.bundle.min.js"></script>
</body>
</html>
